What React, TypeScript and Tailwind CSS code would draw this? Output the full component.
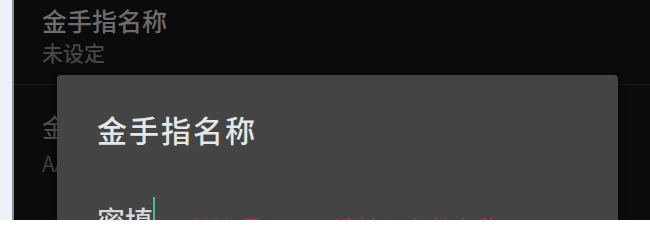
export default function App() {
  return (
    <div
      className="relative flex h-[220px] w-[650px] overflow-hidden bg-[#0b0b0b]"
      style={{ fontFamily: '"Noto Sans CJK SC", "Noto Sans", sans-serif' }}
    >
      {/* left edge of the window behind */}
      <div className="w-[12px] shrink-0 bg-[#eef2f8]" />
      <div className="w-[2px] shrink-0 bg-[#8a8d92]" />

      {/* settings list */}
      <div className="flex-1 bg-[#0b0b0b]">
        <div className="border-b border-[#1c1c1c] pl-[28px] pt-[5px] pb-[18px]">
          <div className="text-[25px] font-medium leading-[30px] text-[#6c6c6c]">金手指名称</div>
          <div className="mt-[3px] text-[21px] font-medium leading-[28px] text-[#464646]">未设定</div>
        </div>
        <div className="pl-[28px] pt-[26px]">
          <div className="text-[25px] leading-[30px] text-[#555]">金手指代码</div>
          <div className="mt-[8px] text-[21px] leading-[28px] text-[#404040]">AAAAAAAA</div>
        </div>
      </div>

      {/* dialog */}
      <div className="absolute left-[57px] top-[75px] h-[200px] w-[561px] rounded-[4px] bg-[#444444] pl-[40px] pt-[36px] shadow-[0_0_6px_rgba(0,0,0,0.6)]">
        <div className="text-[30px] font-medium leading-[36px] tracking-[2px] text-[#e6e6e6]">金手指名称</div>
        <div className="mt-[56px] flex items-start">
          <span className="text-[28px] font-medium leading-[34px] text-[#d8d8d8]">密填</span>
          <span className="mt-[-6px] h-[34px] w-[2px] bg-[#4db6a4]" />
          <span className="ml-[32px] mt-[10px] text-[24px] leading-[30px] text-[#a0305e]">必填项</span>
          <span className="ml-[74px] mt-[10px] text-[24px] leading-[30px] text-[#a0305e]">请输入有效名称</span>
        </div>
      </div>
    </div>
  );
}
